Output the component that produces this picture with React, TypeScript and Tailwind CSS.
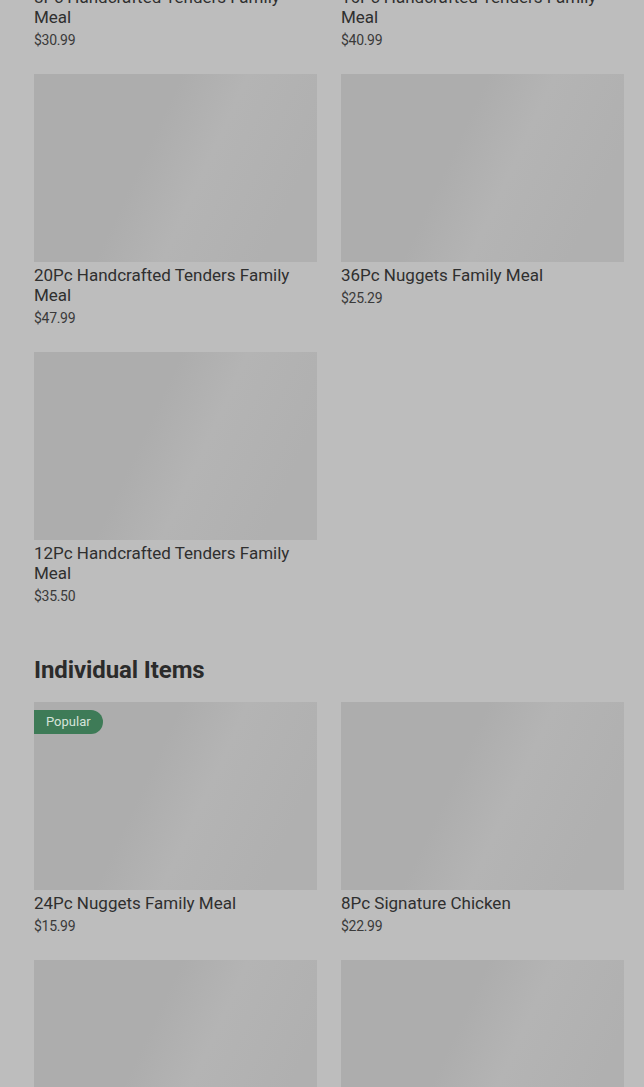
import React from 'react';

type Item = { name: string; price: string; popular?: boolean };

const familyMeals: Item[] = [
  { name: '8Pc Handcrafted Tenders Family Meal', price: '$30.99' },
  { name: '16Pc Handcrafted Tenders Family Meal', price: '$40.99' },
  { name: '20Pc Handcrafted Tenders Family Meal', price: '$47.99' },
  { name: '36Pc Nuggets Family Meal', price: '$25.29' },
  { name: '12Pc Handcrafted Tenders Family Meal', price: '$35.50' },
];

const individualItems: Item[] = [
  { name: '24Pc Nuggets Family Meal', price: '$15.99', popular: true },
  { name: '8Pc Signature Chicken', price: '$22.99' },
  { name: '3Pc Signature Chicken', price: '$9.99' },
  { name: '4Pc Handcrafted Tenders', price: '$10.99' },
];

const Card: React.FC<{ item: Item }> = ({ item }) => (
  <div className="flex flex-col">
    <div className="relative h-[188px] w-full bg-[linear-gradient(115deg,#adadad_40%,#b4b4b4_58%,#b0b0b0_85%)]">
      {item.popular && (
        <span className="absolute left-0 top-2 flex h-6 items-center rounded-r-full bg-[#3e7b57] px-3 text-[13px] text-[#d6e3da]">
          Popular
        </span>
      )}
    </div>
    <h3 className="mt-[3px] text-[17px] leading-5 text-[#2f2f2f]">{item.name}</h3>
    <p className="mt-[3px] text-[14px] leading-5 tracking-[-0.3px] text-[#3a3a3a]">{item.price}</p>
  </div>
);

export default function App() {
  return (
    <div className="min-h-screen overflow-hidden bg-[#bdbdbd] font-['Roboto',sans-serif]">
      <div className="-mt-[204px] pl-[34px] pr-[20px]">
        <div className="grid grid-cols-2 gap-6">
          {familyMeals.map((m) => (
            <Card key={m.name} item={m} />
          ))}
        </div>
        <h2 className="mt-12 text-[24px] font-bold leading-8 tracking-[-0.1px] text-[#2b2b2b]">Individual Items</h2>
        <div className="mt-4 grid grid-cols-2 gap-6 pb-10">
          {individualItems.map((m) => (
            <Card key={m.name} item={m} />
          ))}
        </div>
      </div>
    </div>
  );
}
